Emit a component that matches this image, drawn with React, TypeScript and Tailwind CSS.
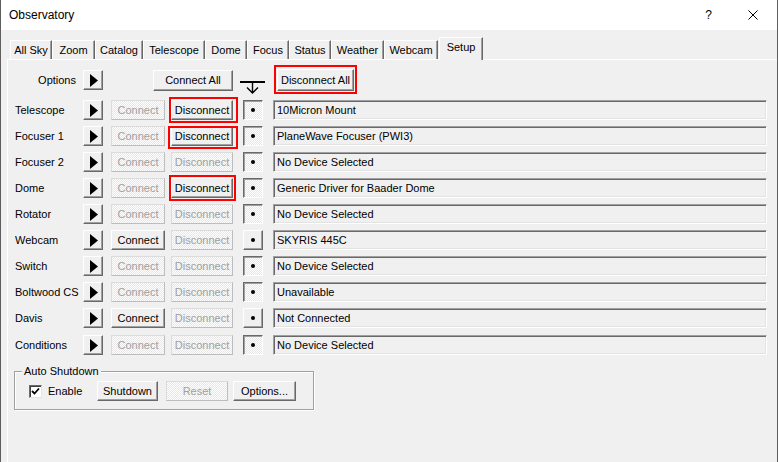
import React from "react";

const raised =
  "flex items-center justify-center bg-[#f0f0f0] border border-t-white border-l-white border-r-[#696969] border-b-[#696969] shadow-[inset_-1px_-1px_0_#a0a0a0]";
const dither =
  "bg-[image:repeating-conic-gradient(#ffffff_0_25%,#e6e6e6_0_50%)] bg-[length:2px_2px]";
const disabled =
  "flex items-center justify-center border border-t-[#dcdcdc] border-l-[#dcdcdc] border-r-[#bdbdbd] border-b-[#bdbdbd] text-[#a0a0a0] " +
  dither;
const sunken =
  "flex items-center justify-center border border-t-[#696969] border-l-[#696969] border-r-white border-b-white shadow-[inset_1px_1px_0_#a0a0a0] " +
  dither;

const tabs = [
  { label: "All Sky", w: "w-[42px]" },
  { label: "Zoom", w: "w-[43px]" },
  { label: "Catalog", w: "w-[48px]" },
  { label: "Telescope", w: "w-[62px]" },
  { label: "Dome", w: "w-[42px]" },
  { label: "Focus", w: "w-[42px]" },
  { label: "Status", w: "w-[42px]" },
  { label: "Weather", w: "w-[53px]" },
  { label: "Webcam", w: "w-[54px]" },
];

type Row = {
  name: string;
  connect: boolean;
  disconnect: boolean;
  dotRaised: boolean;
  device: string;
  box?: string;
  extra?: string;
};

const rows: Row[] = [
  { name: "Telescope", connect: false, disconnect: true, dotRaised: false, device: "10Micron Mount", box: "-left-[2px] -right-[5px] -top-[3px] -bottom-[3px]" },
  { name: "Focuser 1", connect: false, disconnect: true, dotRaised: false, device: "PlaneWave Focuser (PWI3)", box: "-left-[3px] -right-[5px] top-0 -bottom-[3px]" },
  { name: "Focuser 2", connect: false, disconnect: false, dotRaised: false, device: "No Device Selected" },
  { name: "Dome", connect: false, disconnect: true, dotRaised: false, device: "Generic Driver for Baader Dome", box: "-left-[2px] -right-[3px] -top-[3px] -bottom-[3px]" },
  { name: "Rotator", connect: false, disconnect: false, dotRaised: false, device: "No Device Selected" },
  { name: "Webcam", connect: true, disconnect: false, dotRaised: true, device: "SKYRIS 445C" },
  { name: "Switch", connect: false, disconnect: false, dotRaised: false, device: "No Device Selected" },
  { name: "Boltwood CS", connect: false, disconnect: false, dotRaised: false, device: "Unavailable" },
  { name: "Davis", connect: true, disconnect: false, dotRaised: true, device: "Not Connected" },
  { name: "Conditions", connect: false, disconnect: false, dotRaised: false, device: "No Device Selected", extra: "mt-px" },
];

function Play() {
  return (
    <div className={raised + " w-[20px] h-[20px] shrink-0"}>
      <svg width="8" height="13" viewBox="0 0 8 13" className="ml-[2px]">
        <polygon points="0,0 8,6.5 0,13" fill="#000" />
      </svg>
    </div>
  );
}

export default function App() {
  return (
    <div className="w-[778px] h-[462px] overflow-hidden bg-[#f0f0f0] border-l border-r border-[#5f5f5f] font-['Liberation_Sans',Arial,sans-serif] text-[11px] text-black flex flex-col">
      {/* title bar */}
      <div className="h-[30px] shrink-0 bg-white flex items-center pl-[8px] pr-[19px]">
        <span className="text-[12px]">Observatory</span>
        <span className="ml-auto text-[12px] mr-[36px]">?</span>
        <svg width="10" height="10" viewBox="0 0 10 10">
          <path d="M0.5 0.5 L9.5 9.5 M9.5 0.5 L0.5 9.5" stroke="#000" strokeWidth="1" />
        </svg>
      </div>

      <div className="flex-1 flex flex-col pt-[7px] pl-[6px]">
        {/* tabs */}
        <div className="h-[22px] shrink-0 flex items-end pl-[3px]">
          {tabs.map((t) => (
            <div
              key={t.label}
              className={
                t.w +
                " h-[19px] flex items-center justify-center border-t border-l border-white border-r border-r-[#696969] shadow-[inset_-1px_0_0_#a0a0a0]"
              }
            >
              {t.label}
            </div>
          ))}
          <div className="relative z-10 ml-px w-[44px] h-[23px] -mb-px bg-[#f0f0f0] flex items-center justify-center pb-[3px] border-t border-l border-white border-r border-r-[#696969] shadow-[inset_-1px_0_0_#a0a0a0]">
            Setup
          </div>
        </div>

        {/* page */}
        <div className="flex-1 border-t border-l border-white pl-[7px] pt-[10px] pr-[10px]">
          {/* options row */}
          <div className="flex items-start h-[21px]">
            <div className="w-[68px] h-[21px] flex items-center justify-end pr-[7px]">Options</div>
            <Play />
            <div className={raised + " ml-[50px] w-[80px] h-[21px]"}>Connect All</div>
            <svg width="25" height="16" viewBox="0 0 25 16" className="ml-[7px] mt-[10px] shrink-0">
              <rect x="0" y="1" width="25" height="2" fill="#000" />
              <path d="M12.5 3 V13 M7 7.5 L12.5 13 L18 7.5" stroke="#000" strokeWidth="1.4" fill="none" />
            </svg>
            <div className="relative ml-[12px] -mt-px">
              <div className={raised + " w-[77px] h-[22px]"}>Disconnect All</div>
              <div className="absolute -left-[3px] -right-[3px] -top-[4px] -bottom-[3px] border-2 border-[#ff0000]" />
            </div>
          </div>

          {/* device rows */}
          <div className="flex flex-col gap-[6px] mt-[9px]">
            {rows.map((r) => (
              <div key={r.name} className={"flex items-center h-[20px] " + (r.extra ?? "")}>
                <div className="w-[68px]">{r.name}</div>
                <Play />
                <div className={(r.connect ? raised : disabled) + " ml-[8px] w-[54px] h-[20px]"}>Connect</div>
                <div className="relative ml-[6px]">
                  <div className={(r.disconnect ? raised : disabled) + " w-[62px] h-[20px]"}>Disconnect</div>
                  {r.box && <div className={"absolute border-2 border-[#ff0000] " + r.box} />}
                </div>
                <div className={(r.dotRaised ? raised : sunken) + " ml-[10px] w-[20px] h-[20px]"}>
                  <div className="w-[4px] h-[4px] rounded-full bg-black" />
                </div>
                <div className="ml-[10px] flex-1 h-[20px] flex items-center pl-[3px] border border-t-[#a0a0a0] border-l-[#a0a0a0] border-r-white border-b-white shadow-[inset_1px_1px_0_#696969,inset_-1px_-1px_0_#e3e3e3]">
                  {r.device}
                </div>
              </div>
            ))}
          </div>

          {/* auto shutdown group */}
          <div className="relative mt-[16px] -ml-px w-[300px] h-[39px] border border-[#a0a0a0] shadow-[1px_1px_0_#ffffff,inset_1px_1px_0_#ffffff] flex items-center pl-[14px] pt-[1px]">
            <div className="absolute left-[7px] -top-[8px] px-[2px] bg-[#f0f0f0] leading-[14px]">Auto Shutdown</div>
            <div className="w-[68px] flex items-center">
              <div className="w-[13px] h-[13px] bg-white border border-t-[#696969] border-l-[#696969] border-r-[#e3e3e3] border-b-[#e3e3e3] shadow-[inset_1px_1px_0_#404040] flex items-center justify-center">
                <svg width="9" height="9" viewBox="0 0 9 9">
                  <path d="M1 4 L3.5 6.5 L8 1.5" stroke="#000" strokeWidth="1.8" fill="none" />
                </svg>
              </div>
              <span className="ml-[6px]">Enable</span>
            </div>
            <div className={raised + " w-[61px] h-[20px]"}>Shutdown</div>
            <div className={disabled + " ml-[8px] w-[62px] h-[20px]"}>Reset</div>
            <div className={raised + " ml-[5px] w-[63px] h-[20px]"}>Options...</div>
          </div>
        </div>
      </div>
    </div>
  );
}
